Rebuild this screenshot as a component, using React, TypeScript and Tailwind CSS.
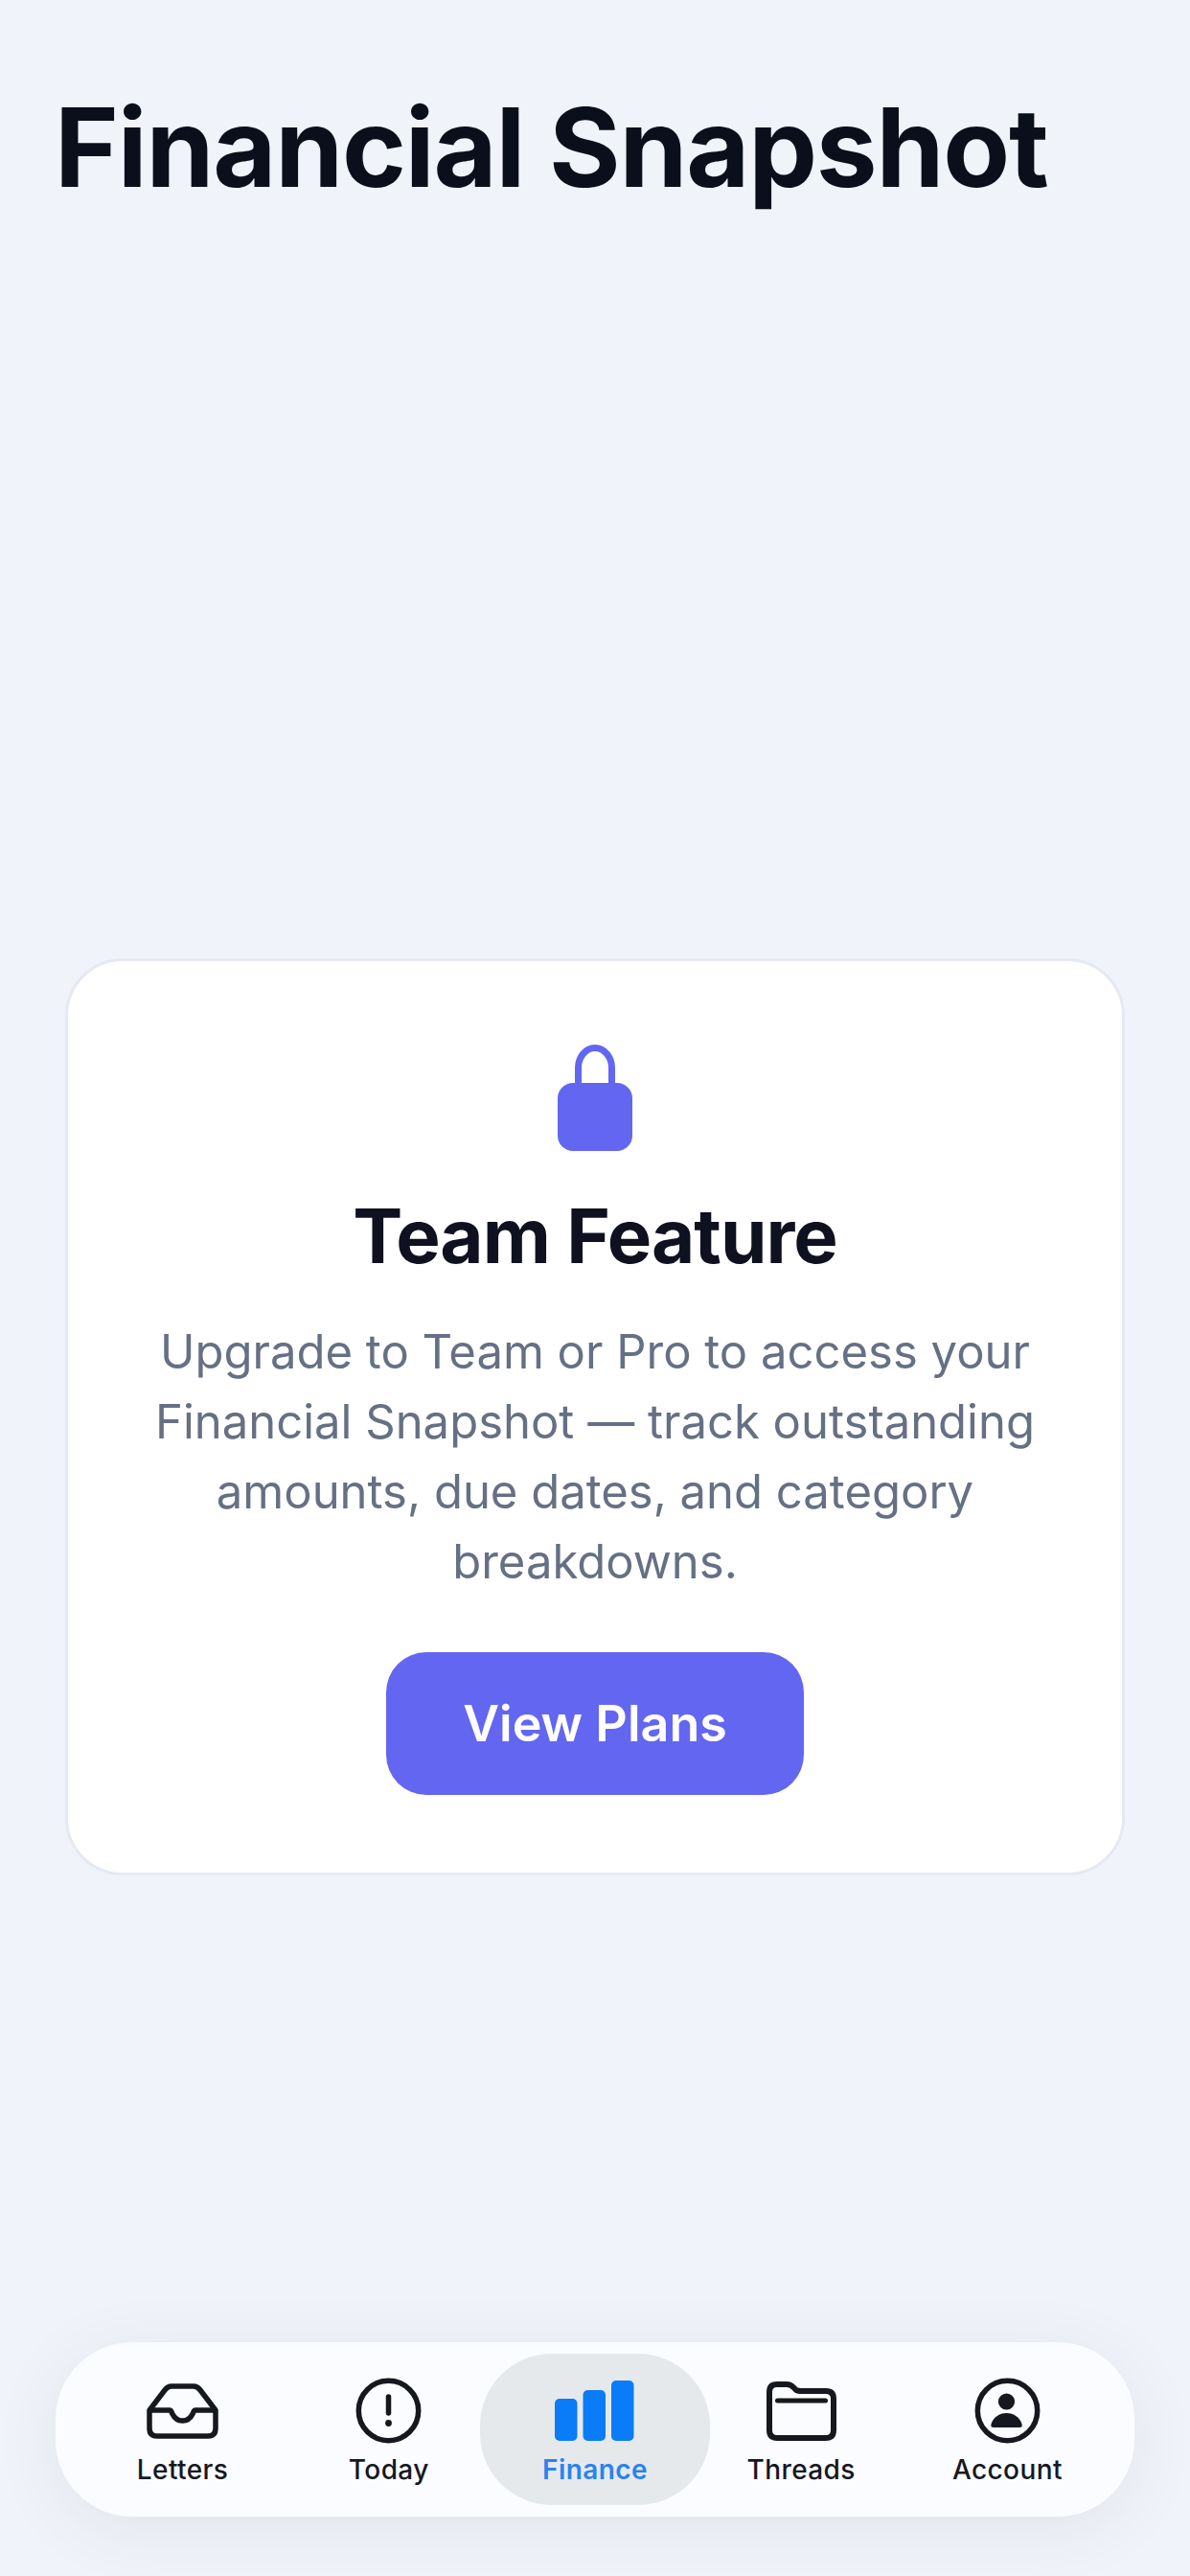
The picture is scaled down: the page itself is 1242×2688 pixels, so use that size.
import type { ReactNode } from 'react';

const inkIcon = 'block shrink-0 text-[#16181f]';

function LettersIcon() {
  return (
    <svg className={inkIcon} width="75" height="58" viewBox="0 0 75 58" fill="none" stroke="currentColor" strokeWidth="5.500" strokeLinejoin="round">
      <path d="M3 28 L19 7 Q22 3 26 3 H49 Q53 3 56 7 L72 28 V47 Q72 55 64 55 H11 Q3 55 3 47 Z" />
      <path d="M3 28 H24 C26 28 26 30 27 32 C29 36 33 39 37.500 39 C42 39 46 36 48 32 C49 30 49 28 51 28 H72" />
    </svg>
  );
}

function TodayIcon() {
  return (
    <svg className={inkIcon} width="69" height="69" viewBox="0 0 69 69" fill="none" stroke="currentColor">
      <circle cx="34.5" cy="34.5" r="31.2" strokeWidth="5.500" />
      <path d="M34.5 20 V37" strokeWidth="5.500" strokeLinecap="round" />
      <circle cx="34.5" cy="47.5" r="3.4" fill="currentColor" stroke="none" />
    </svg>
  );
}

function FinanceIcon() {
  return (
    <svg className="block shrink-0 text-[#0a7cf7]" width="83" height="63" viewBox="0 0 83 63" fill="currentColor">
      <rect x="0" y="19" width="23.5" height="44" rx="5" />
      <rect x="29.5" y="10" width="23.5" height="53" rx="5" />
      <rect x="59" y="0" width="23.5" height="63" rx="5" />
    </svg>
  );
}

function ThreadsIcon() {
  return (
    <svg className={inkIcon} width="73" height="62" viewBox="0 0 73 62" fill="none" stroke="currentColor" strokeLinejoin="round">
      <path strokeWidth="6" d="M3 11 Q3 3 11 3 H21 Q25 3 28 6 L31 9 Q33 10 36 10 H62 Q70 10 70 18 V51 Q70 59 62 59 H11 Q3 59 3 51 Z" />
      <path strokeWidth="5" strokeLinecap="round" d="M11.5 20 H61.5" />
    </svg>
  );
}

function AccountIcon() {
  return (
    <svg className={inkIcon} width="69" height="69" viewBox="0 0 69 69" fill="none" stroke="currentColor">
      <circle cx="34.5" cy="34.5" r="31.2" strokeWidth="5.500" />
      <circle cx="33.5" cy="25" r="8.6" fill="currentColor" stroke="none" />
      <path fill="currentColor" stroke="none" d="M20 52 Q16.500 52 17.500 48.500 C19.500 41.500 26 37 33.500 37 C41 37 47.500 41.500 49.500 48.500 Q50.500 52 47 52 Z" />
    </svg>
  );
}

function LockIcon() {
  return (
    <svg className="block" width="78" height="111" viewBox="0 0 78 111" fill="none">
      <path d="M21.500 44 V24 C21.500 14 28.500 3.500 39 3.500 C49.500 3.500 56.500 14 56.500 24 V44" stroke="#6366f1" strokeWidth="7" />
      <rect x="0" y="40" width="78" height="71" rx="16" fill="#6366f1" />
    </svg>
  );
}

function Tab({ label, icon, active }: { label: string; icon: ReactNode; active?: boolean }) {
  return (
    <div
      className={
        active
          ? 'flex flex-col items-center -mx-3 h-[158px] rounded-[75px] bg-[#e6e9ec] pt-[28px]'
          : 'flex flex-col items-center h-[158px] pt-[28px]'
      }
    >
      <div className="flex h-[63px] items-center justify-center">{icon}</div>
      <span
        className={
          active
            ? 'mt-[12px] text-[28px] leading-[36px] tracking-[0.4px] font-semibold text-[#2a83ee]'
            : 'mt-[12px] text-[28px] leading-[36px] tracking-[0.4px] font-medium text-[#16181f]'
        }
      >
        {label}
      </span>
    </div>
  );
}

export default function App() {
  return (
    <div className="flex h-[2688px] w-[1242px] flex-col overflow-hidden bg-[#f0f3fa] font-['Inter',sans-serif]">
      <h1 className="pl-[57px] pt-[86px] text-[114px] leading-[136px] font-bold tracking-[-1.200px] text-[#0b0f1c]">
        Financial Snapshot
      </h1>

      <section className="mx-[68px] mt-[778px] flex h-[957px] flex-col items-center rounded-[60px] border-[3px] border-[#e5e9f2] bg-white pt-[87px]">
        <LockIcon />
        <h2 className="mt-[41px] text-[78px] leading-[96px] font-bold tracking-[-1px] text-[#0f1120]">Team Feature</h2>
        <p className="mt-[36px] w-[960px] text-center text-[49px] leading-[73px] text-[#667085]">
          Upgrade to Team or Pro to access your Financial Snapshot — track outstanding amounts, due dates, and category
          breakdowns.
        </p>
        <button className="mt-[58px] h-[149px] w-[436px] rounded-[42px] bg-[#6366f1] text-[52px] font-semibold text-white">
          View Plans
        </button>
      </section>

      <nav className="mx-[58px] mt-[487px] grid h-[182px] grid-cols-5 rounded-[80px] bg-[#fbfcff] px-[25px] pt-[12px] shadow-[0_12px_70px_rgba(60,60,70,0.08)]">
        <Tab label="Letters" icon={<LettersIcon />} />
        <Tab label="Today" icon={<TodayIcon />} />
        <Tab label="Finance" icon={<FinanceIcon />} active />
        <Tab label="Threads" icon={<ThreadsIcon />} />
        <Tab label="Account" icon={<AccountIcon />} />
      </nav>
    </div>
  );
}
